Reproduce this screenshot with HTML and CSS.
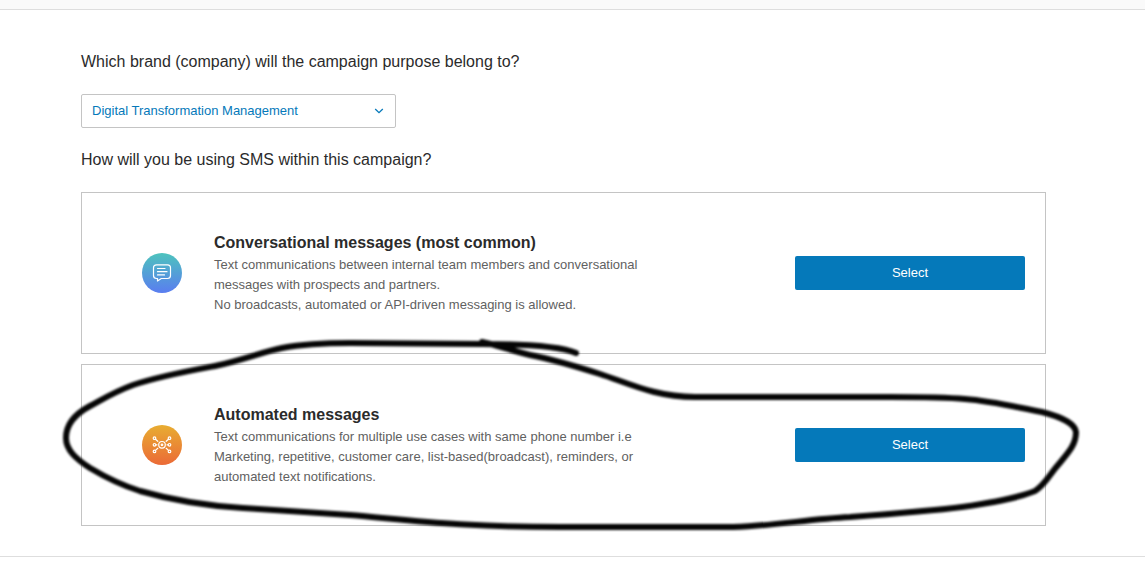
FILE: index.html
```
<!DOCTYPE html>
<html lang="en">
<head>
  <meta charset="utf-8">
  <meta name="viewport" content="width=device-width, initial-scale=1">
  <title>Campaign purpose</title>
  <link rel="stylesheet" href="styles.css">
</head>
<body>
  <div class="topbar"></div>
  <main class="form">
    <label class="question" for="brand">Which brand (company) will the campaign purpose belong to?</label>
    <div class="dropdown">
      <select class="dropdown-field" id="brand">
        <option>Digital Transformation Management</option>
      </select>
      <svg class="dropdown-arrow" viewBox="0 0 10 6" aria-hidden="true"><path d="M1.2 1 5 4.7 8.8 1"/></svg>
    </div>
    <h2 class="question">How will you be using SMS within this campaign?</h2>
    <div class="cards">
      <section class="card">
        <svg class="card-icon" viewBox="0 0 40 40" aria-hidden="true">
          <defs>
            <linearGradient id="chat-fill" x1="0" y1="0" x2="0" y2="1">
              <stop offset="0" stop-color="#4dc3bd"/>
              <stop offset="1" stop-color="#5a7df0"/>
            </linearGradient>
          </defs>
          <circle cx="20" cy="20" r="20" fill="url(#chat-fill)"/>
          <g class="icon-line">
            <path d="M14.500 11.800h11a3 3 0 0 1 3 3v7.700a3 3 0 0 1-3 3h-6.200L15.500 28V25.500h-1a3 3 0 0 1-3-3v-7.700a3 3 0 0 1 3-3z"/>
            <path d="M15.500 15.500h7.500M15.500 18.700h9.500M15.500 21.900h7"/>
          </g>
        </svg>
        <div class="card-text">
          <h3 class="card-title">Conversational messages (most common)</h3>
          <p class="card-description">Text communications between internal team members and conversational messages with prospects and partners.<br>No broadcasts, automated or API-driven messaging is allowed.</p>
        </div>
        <button class="select-button" type="button">Select</button>
      </section>
      <section class="card">
        <svg class="card-icon" viewBox="0 0 40 40" aria-hidden="true">
          <defs>
            <linearGradient id="hub-fill" x1="0" y1="0" x2="0" y2="1">
              <stop offset="0" stop-color="#e8ad31"/>
              <stop offset="1" stop-color="#eb6a37"/>
            </linearGradient>
          </defs>
          <circle cx="20" cy="20" r="20" fill="url(#hub-fill)"/>
          <g class="icon-line">
            <circle cx="20" cy="19.800" r="3.300"/>
            <circle cx="20" cy="19.800" r="0.800"/>
            <circle cx="12.500" cy="13.200" r="1.300"/>
            <circle cx="12.500" cy="19.800" r="1.300"/>
            <circle cx="12.500" cy="26.400" r="1.300"/>
            <circle cx="27.500" cy="13.200" r="1.300"/>
            <circle cx="27.500" cy="19.800" r="1.300"/>
            <circle cx="27.500" cy="26.400" r="1.300"/>
            <path d="M13.500 14.200 15.800 16.300M13.900 19.800H15M13.500 25.400 15.800 23.300M26.500 14.200 24.200 16.300M26.100 19.800H25M26.500 25.400 24.200 23.300"/>
          </g>
        </svg>
        <div class="card-text">
          <h3 class="card-title">Automated messages</h3>
          <p class="card-description">Text communications for multiple use cases with same phone number i.e Marketing, repetitive, customer care, list-based(broadcast), reminders, or automated text notifications.</p>
        </div>
        <button class="select-button" type="button">Select</button>
        <svg class="marker" viewBox="81 364 965 162" preserveAspectRatio="none" aria-hidden="true">
          <path d="M576 353C560 346 520 344 482 344L350 343C316 343 298 345 282 348C262 352 243 360 215 366C188 371 160 376 133 385C114 392 103 399 90 406C75 414 66 425 66 438C66 450 76 459 90 468C105 477 121 485 140 491C175 501 209 506 243 508L350 515C410 520 460 527 560 527H733C775 526 808 519 850 517C890 514 930 511 962 507C990 503 1015 499 1035 491C1045 485 1050 474 1058 465C1068 453 1076 445 1076 432C1075 424 1062 417 1042 412C1015 407 992 401 965 399C943 397 920 397 890 397H695C655 397 628 383 600 374C575 366 555 360 530 355C512 351 497 345 482 342"/>
        </svg>
      </section>
    </div>
  </main>
</body>
</html>
```
FILE: styles.css
```
* {
  box-sizing: border-box;
}

body {
  margin: 0;
  background: #fff;
  color: #2b2b2b;
  font-family: "Liberation Sans", Arial, sans-serif;
  font-size: 13px;
}

.topbar {
  height: 10px;
  background: #fafafa;
  border-bottom: 1px solid #dedede;
}

.form {
  display: flex;
  flex-direction: column;
  gap: 20px;
  padding: 40px 99px 30px 81px;
  border-bottom: 1px solid #dedede;
}

.question {
  margin: 0;
  font-size: 16px;
  font-weight: 400;
  line-height: 24px;
}

.dropdown {
  display: grid;
  align-items: center;
  width: 100%;
  max-width: 315px;
}

.dropdown-field,
.dropdown-arrow {
  grid-area: 1 / 1;
}

.dropdown-field {
  width: 100%;
  height: 34px;
  padding: 0 32px 2px 10px;
  appearance: none;
  background: #fff;
  border: 1px solid #c4c4c4;
  border-radius: 2px;
  color: #0579ba;
  font: inherit;
}

.dropdown-arrow {
  justify-self: end;
  width: 10px;
  height: 6px;
  margin-right: 12px;
  fill: none;
  stroke: #0579ba;
  stroke-width: 1.3;
  pointer-events: none;
}

.cards {
  display: grid;
  gap: 10px;
}

.card {
  position: relative;
  display: flex;
  align-items: center;
  min-height: 162px;
  padding: 20px 20px 20px 60px;
  border: 1px solid #c4c4c4;
}

.card-icon {
  flex: none;
  width: 40px;
  height: 40px;
}

.icon-line {
  fill: none;
  stroke: #fff;
  stroke-width: 1.2;
  stroke-linecap: round;
  stroke-linejoin: round;
}

.card-text {
  flex: 0 1 430px;
  margin: 0 32px;
}

.card-title {
  margin: 0;
  font-size: 16px;
  font-weight: 700;
  line-height: 24px;
}

.card-description {
  margin: 0;
  color: #616161;
  line-height: 20px;
}

.select-button {
  flex: none;
  width: 230px;
  height: 34px;
  padding: 0 12px 2px;
  margin-left: auto;
  background: #0579ba;
  border: 0;
  border-radius: 2px;
  color: #fff;
  font: inherit;
}

/* Hand-drawn loop around the automated option */
.marker {
  position: absolute;
  top: -1px;
  left: -1px;
  width: calc(100% + 2px);
  height: calc(100% + 2px);
  overflow: visible;
  fill: none;
  stroke: #050505;
  stroke-width: 6;
  stroke-linecap: round;
  stroke-linejoin: round;
  filter: blur(1px);
  pointer-events: none;
}

.marker path {
  vector-effect: non-scaling-stroke;
}
```
